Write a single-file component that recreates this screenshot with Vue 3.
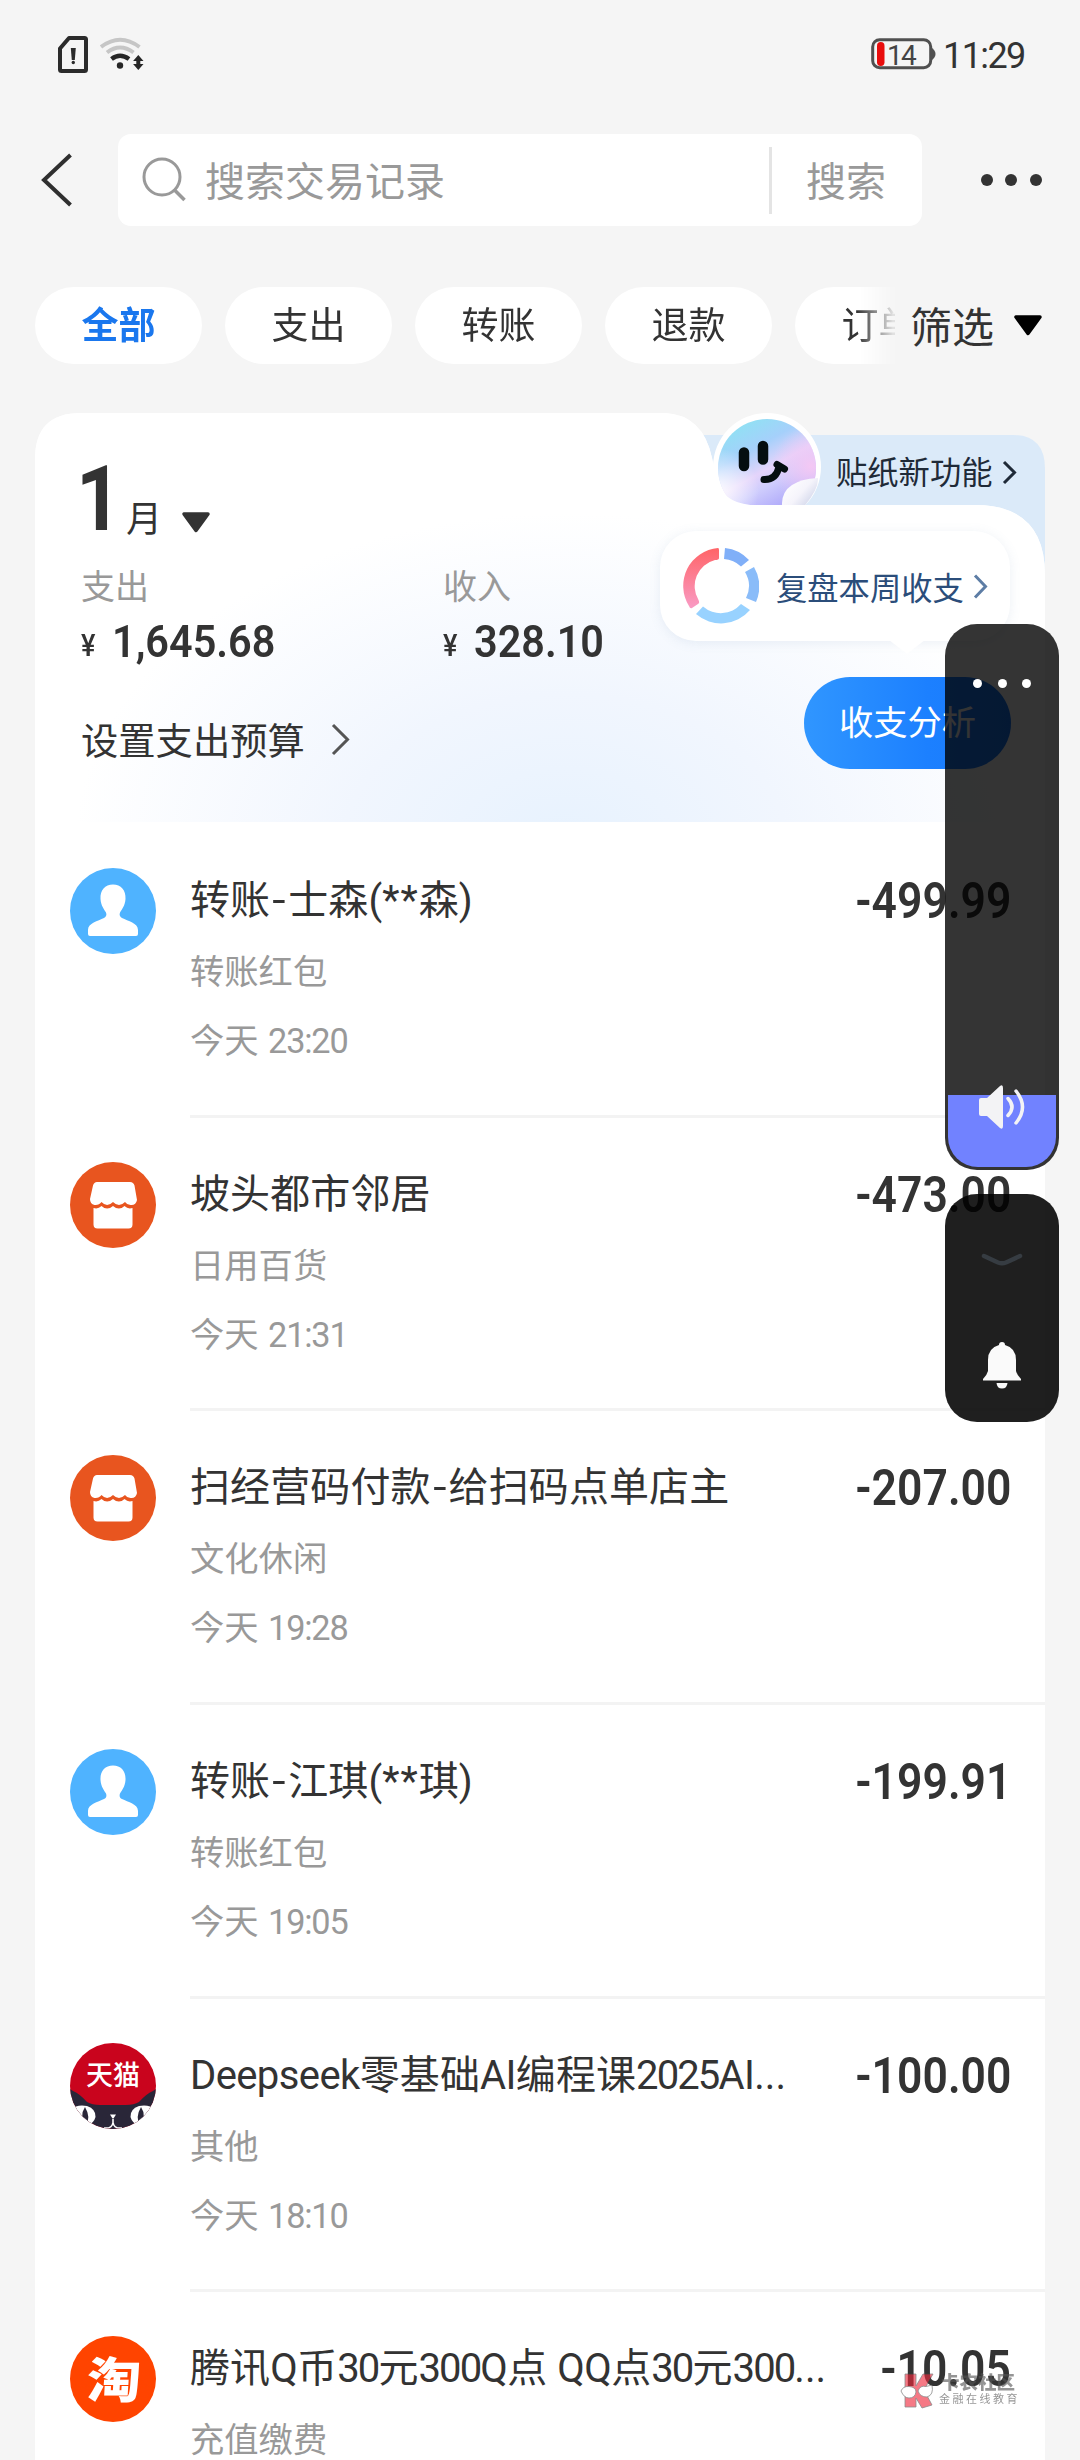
<script setup>
const chips = ['支出', '转账', '退款', '订单']

const records = [
  { icon: 'person', title: '转账-士森(**森)', tag: '转账红包', day: '今天', time: '23:20', amount: '-499.99' },
  { icon: 'shop', title: '坡头都市邻居', tag: '日用百货', day: '今天', time: '21:31', amount: '-473.00' },
  { icon: 'shop', title: '扫经营码付款-给扫码点单店主', tag: '文化休闲', day: '今天', time: '19:28', amount: '-207.00' },
  { icon: 'person', title: '转账-江琪(**琪)', tag: '转账红包', day: '今天', time: '19:05', amount: '-199.91' },
  { icon: 'tmall', title: 'Deepseek零基础AI编程课2025AI...', tag: '其他', day: '今天', time: '18:10', amount: '-100.00' },
  { icon: 'taobao', title: '腾讯Q币30元300Q点 QQ点30元300...', tag: '充值缴费', amount: '-10.05' },
]

// Latin letters, digits and dashes are spaced differently from Han characters
function segments(text) {
  return text.match(/-|\*+|[A-Za-z]+|[0-9]+|\.{3}|[^A-Za-z0-9.*-]+/g).map((t) => ({
    t,
    kind: t === '-' ? 'dash' : /^[0-9]/.test(t) ? 'digits' : /^[A-Z]/i.test(t) ? 'latin' : t[0] === '*' ? 'stars' : 'han',
  }))
}
</script>

<template>
  <div class="screen">
    <div class="status">
      <svg class="sim" width="30" height="37" viewBox="0 0 30 37">
        <path d="M11 2H26.500Q28 2 28 3.500V33.500Q28 35 26.500 35H3.500Q2 35 2 33.500V12.500Z" fill="none" stroke="#2b2b2b" stroke-width="4" stroke-linejoin="round" />
        <path d="M12.800 12h5l-1 12h-3z" fill="#2b2b2b" /><circle cx="15.300" cy="26.500" r="1.700" fill="#2b2b2b" />
      </svg>
      <svg class="wifi" width="45" height="36" viewBox="0 0 45 36">
        <g fill="none" stroke-width="4">
          <path d="M1 10Q20 -4.500 39.500 10" stroke="#c6c6c6" />
          <path d="M7 15.500Q20 5.500 33.500 15.500" stroke="#c6c6c6" />
          <path d="M11.500 22Q20 15.500 29 22" stroke="#262626" stroke-width="4.500" />
        </g>
        <circle cx="20" cy="28.500" r="3.200" fill="#262626" />
        <path d="M38.300 18l5.200 6h-3.200v3h3.200l-5.200 6-5.200-6h3.200v-3h-3.200z" fill="#262626" />
      </svg>
      <span class="grow"></span>
      <div class="battery">
        <svg width="65" height="32" viewBox="0 0 65 32">
          <rect x="1.700" y="1.700" width="58" height="28" rx="7" fill="none" stroke="#505050" stroke-width="3" />
          <path d="M59.500 9q5 3 5 7t-5 7z" fill="#505050" />
          <rect x="6" y="4" width="7.500" height="24" rx="3.700" fill="#e90d0d" />
        </svg>
        <span class="level">14</span>
      </div>
      <span class="clock">11:29</span>
    </div>

    <div class="nav">
      <svg class="back" width="34" height="54" viewBox="0 0 34 54"><path d="M30.500 2L4 27L30.500 52" fill="none" stroke="#2f2f2f" stroke-width="4" /></svg>
      <div class="search">
        <svg width="46" height="46" viewBox="0 0 46 46"><circle cx="20" cy="20" r="18" fill="none" stroke="#999" stroke-width="3" /><path d="M32 32.500L42.500 43" stroke="#999" stroke-width="3.500" /></svg>
        <span class="hint">搜索交易记录</span>
        <i class="bar"></i>
        <span class="go">搜索</span>
      </div>
      <div class="more"><i></i><i></i><i></i></div>
    </div>

    <div class="filters">
      <div class="chips">
        <span class="chip on">全部</span>
        <span v-for="c in chips" :key="c" class="chip">{{ c }}</span>
      </div>
      <span class="pick">筛选</span>
      <svg width="30" height="21" viewBox="0 0 30 21"><path d="M3 2H27L15 18.500Z" fill="#000" stroke="#000" stroke-width="3.500" stroke-linejoin="round" /></svg>
    </div>

    <div class="card">
      <div class="summary">
        <svg class="shape" width="1010" height="411" viewBox="0 0 1010 411">
          <defs>
            <radialGradient id="glow" gradientUnits="userSpaceOnUse" cx="0" cy="0" r="1" gradientTransform="translate(530 430) scale(490 330)">
              <stop offset="0" stop-color="#e7f2fe" /><stop offset=".45" stop-color="#f1f6fe" /><stop offset="1" stop-color="#ffffff" />
            </radialGradient>
            <linearGradient id="face" x1=".2" y1="0" x2=".75" y2="1">
              <stop offset="0" stop-color="#8ce4f2" /><stop offset=".3" stop-color="#a5d0fb" /><stop offset=".52" stop-color="#e4d4fb" /><stop offset=".65" stop-color="#cfcdfd" /><stop offset=".85" stop-color="#b3aefa" /><stop offset="1" stop-color="#e5c9fb" />
            </linearGradient>
            <radialGradient id="sheen" cx="0" cy=".72" r=".42"><stop offset="0" stop-color="#fff" stop-opacity=".9" /><stop offset="1" stop-color="#fff" stop-opacity="0" /></radialGradient>
            <radialGradient id="pink" cx=".95" cy=".48" r=".4"><stop offset="0" stop-color="#f4c8f4" /><stop offset="1" stop-color="#f4c8f4" stop-opacity="0" /></radialGradient>
            <linearGradient id="curl" x1="0" y1="0" x2="1" y2="1"><stop offset=".1" stop-color="#fff" /><stop offset=".45" stop-color="#f5f4fb" /><stop offset=".7" stop-color="#d5d9ec" /></linearGradient>
            <clipPath id="above"><rect x="660" y="0" width="140" height="92" /></clipPath>
          </defs>
          <path d="M640 22H978Q1010 22 1010 56V170H640Z" fill="#dbeaf9" />
          <path d="M0 411V46Q0 0 46 0H630Q668 2 677 45Q684 92 735 92H940Q1010 92 1010 162V411Z" fill="#fff" />
          <path d="M0 409V46Q0 0 46 0H630Q668 2 677 45Q684 92 735 92H940Q1010 92 1010 162V409Z" fill="url(#glow)" />
          <g clip-path="url(#above)">
            <circle cx="732" cy="54" r="54" fill="#fff" />
            <circle cx="732" cy="55" r="49" fill="url(#face)" />
            <circle cx="732" cy="55" r="49" fill="url(#sheen)" />
            <circle cx="732" cy="55" r="49" fill="url(#pink)" />
            <path d="M747 105V90Q748 67 783 65Q784 80 758 105Z" fill="url(#curl)" />
            <path d="M683 65Q686 92 724 92.500L683 93Z" fill="#fff" />
          </g>
          <g stroke="#050e10" fill="none" stroke-linecap="round">
            <path d="M709 39.500v13.500M728 33v13.500" stroke-width="10.500" />
            <path d="M729 66.500Q741 67 744 54" stroke-width="7" />
            <path d="M742 51.500L749.500 56" stroke-width="7" />
          </g>
        </svg>

        <div class="month">
          <b>1</b><span>月</span>
          <svg width="30" height="21" viewBox="0 0 30 21"><path d="M3 2H27L15 18.500Z" fill="#333" stroke="#333" stroke-width="3.500" stroke-linejoin="round" /></svg>
        </div>
        <div class="totals">
          <div class="total"><span class="label">支出</span><span class="sum"><em>¥</em><b>1,645.68</b></span></div>
          <div class="total"><span class="label">收入</span><span class="sum"><em>¥</em><b>328.10</b></span></div>
        </div>
        <div class="budget">
          设置支出预算
          <svg width="20" height="33" viewBox="0 0 20 33"><path d="M2 2L16.500 16.500L2 31" fill="none" stroke="#555" stroke-width="3" /></svg>
        </div>

        <div class="sticker">
          <span>贴纸新功能</span>
          <svg width="16" height="25" viewBox="0 0 16 25"><path d="M2 2L12.500 12.500L2 23" fill="none" stroke="#1f2a38" stroke-width="3" /></svg>
        </div>
        <div class="review">
          <svg class="donut" width="76" height="78" viewBox="-38 -39 76 78">
            <defs><linearGradient id="red" x1="0" y1="0" x2="0" y2="1"><stop offset="0" stop-color="#ff6467" /><stop offset="1" stop-color="#f99bc4" /></linearGradient></defs>
            <path d="M-3 -38Q-2 -38 -2 -36V-28Q-2 -26 -6 -26A27 27 0 0 0 -22.500 14Q-21 17 -23 18L-29 22Q-31 23 -32 20A38 38 0 0 1 -3 -38Z" fill="url(#red)" />
            <path d="M4 -38A38 38 0 0 1 28 -26L20 -19.500A27 27 0 0 0 3 -27Z" fill="#80aff8" />
            <path d="M33 -19A38 38 0 0 1 35 16L25 12A27 27 0 0 0 24 -14Z" fill="#8abcf9" />
            <path d="M29 24A38 38 0 0 1 -25 28L-18 20.500A27 27 0 0 0 20 18Z" fill="#98d2ff" />
          </svg>
          <span>复盘本周收支</span>
          <svg width="16" height="25" viewBox="0 0 16 25"><path d="M2 1.500L12.500 12.500L2 23.500" fill="none" stroke="#5d7da5" stroke-width="3" /></svg>
          <i class="tail"></i>
        </div>
        <div class="analyse">收支分析</div>
      </div>

      <div v-for="(r, i) in records" :key="i" class="record">
        <svg class="icon" width="86" height="86" viewBox="0 0 86 86">
          <template v-if="r.icon === 'person'">
            <circle cx="43" cy="43" r="43" fill="#4fb3ff" />
            <path d="M43 16.500C51 16.500 56 22 55.500 31C55 38 52 41 50 44.500C49 47 50 49 52 50C58 53 68 55 68 62V66Q68 68 66 68H20Q18 68 18 66V62C18 55 28 53 34 50C36 49 37 47 36 44.500C34 41 31 38 30.500 31C30 22 35 16.500 43 16.500Z" fill="#fff" />
          </template>
          <template v-else-if="r.icon === 'shop'">
            <circle cx="43" cy="43" r="43" fill="#e8551f" />
            <path d="M27 20H60Q63.500 20 64.500 23.500L67 38Q66 43 61.500 43Q57.500 43.500 55 40Q49 46 43 40Q37 46 31.500 40Q29 43.500 24.500 43Q20 42 20 37L23 23.500Q24 20 27 20Z" fill="#fff" />
            <path d="M23.500 46Q28 47.500 31.500 44Q37 49 43 44Q49 49 54.500 44Q58 47.500 62.500 46V62.500Q62.500 66.500 58.500 66.500H27.500Q23.500 66.500 23.500 62.500Z" fill="#fff" />
          </template>
          <template v-else-if="r.icon === 'tmall'">
            <defs><clipPath id="disc"><circle cx="43" cy="43" r="43" /></clipPath></defs>
            <g clip-path="url(#disc)">
              <rect width="86" height="86" fill="#c9041d" />
              <path d="M0 46L3 48Q10 51 17 59Q22 62 30 62H56Q64 62 69 59Q76 51 83 48L86 46V86H0Z" fill="#292638" />
              <path d="M0 66Q8 61 17 63Q26 66 25.500 74Q24 80 17 83L7 80Z" fill="#fff" /><path d="M15 64Q9 73 16 83Q21 74 15 64Z" fill="#292638" />
              <path d="M86 66Q78 61 69 63Q60 66 60.500 74Q62 80 69 83L79 80Z" fill="#fff" /><path d="M71 64Q77 73 70 83Q65 74 71 64Z" fill="#292638" />
              <path d="M40 71.500h6l-2.500 4h-1z" fill="#fff" /><path d="M43 76v4M34 85Q42 86 43 79.500Q44 86 52 85" fill="none" stroke="#fff" stroke-width="1.600" />
            </g>
            <text x="43" y="41.500" class="tm">天猫</text>
          </template>
          <template v-else>
            <circle cx="43" cy="43" r="43" fill="#ff4400" />
            <text x="0" y="0" class="tb" transform="translate(43 62) scale(1.100 1) skewX(-3)">淘</text>
          </template>
        </svg>
        <div class="body">
          <div class="info">
            <div class="title"><span v-for="(s, k) in segments(r.title)" :key="k" :class="s.kind">{{ s.t }}</span></div>
            <div class="sub">{{ r.tag }}</div>
            <div v-if="r.time" class="sub time">{{ r.day }} <span>{{ r.time }}</span></div>
          </div>
          <div class="amount">{{ r.amount }}</div>
        </div>
      </div>
    </div>

    <div class="volume">
      <div class="dots"><i></i><i></i><i></i></div>
      <div class="fill"></div>
      <svg width="50" height="46" viewBox="0 0 50 46">
        <path d="M3 14H9L22 2Q25 0 25 4V42Q25 46 22 44L9 32H3Q1 32 1 30V16Q1 14 3 14Z" fill="#f3f3f5" />
        <path d="M30 14.500Q38 23 30 31.500M38 7Q51 23 38 39" fill="none" stroke="#f3f3f5" stroke-width="3.500" stroke-linecap="round" />
      </svg>
    </div>
    <div class="ringer">
      <svg width="42" height="14" viewBox="0 0 42 14"><path d="M3 3L17 9.500Q21 11 25 9.500L39 3" fill="none" stroke="#363c42" stroke-width="4.500" stroke-linecap="round" /></svg>
      <svg width="40" height="48" viewBox="0 0 40 48"><path d="M20 1Q23 1 23 4Q34 7 34 19V30Q35 34 39 38V39.500H1V38Q5 34 6 30V19Q6 7 17 4Q17 1 20 1Z" fill="#fafafa" /><path d="M14.500 42H25.500Q25 47.500 20 47.500Q15 47.500 14.500 42Z" fill="#fafafa" /></svg>
    </div>

    <div class="mark">
      <svg width="34" height="36" viewBox="0 0 34 36">
        <g fill="#f0283c" stroke="#444" stroke-width=".8">
          <path d="M5 1H16V13L23 1H33L24 17L32 32L22 35L16 25V34H5Z" />
          <path d="M1 18Q3 13 9 13.500Q16 14 16 19Q15 25 9 25Q4 25 1 18Z" fill="#fff" /><path d="M18 18Q20 12 26 13.500L32 12Q34 22 27 24Q20 24 18 18Z" fill="#fff" />
        </g>
      </svg>
      <div class="words"><b>卡农社区</b><span>金融在线教育</span></div>
    </div>
  </div>
</template>

<style>
body { margin: 0; background: #f5f5f5; }
</style>

<style scoped>
.screen { position: relative; width: 1080px; height: 2460px; overflow: hidden; background: #f5f5f5; color: #333; font-family: Roboto, "Noto Sans CJK SC", sans-serif; white-space: nowrap; }
.screen svg { display: block; flex: none; }
.screen i, .screen em { font-style: normal; }

.status { display: flex; align-items: center; height: 107px; padding: 0 56px 0 58px; box-sizing: border-box; }
.sim { margin-top: 2px; }
.wifi { margin: 3px 0 0 12px; }
.grow { flex: 1; }
.battery { position: relative; margin-right: 7px; }
.level { position: absolute; left: 16px; top: 4px; font-size: 28px; line-height: 27px; letter-spacing: -1.800px; color: #444; }
.clock { width: 81px; font-size: 36px; line-height: 40px; letter-spacing: -1.600px; margin-top: 5px; }

.nav { display: flex; align-items: center; height: 92px; margin-top: 27px; padding-left: 40px; }
.search { display: flex; align-items: center; width: 804px; height: 92px; margin-left: 44px; padding-left: 24px; box-sizing: border-box; border-radius: 13px; background: #fff; color: #999; font-size: 40px; }
.hint { margin-left: 17px; padding-bottom: 3px; }
.bar { width: 3px; height: 67px; margin-left: 324px; background: #e4e4e4; }
.go { margin-left: 34px; padding-bottom: 2px; }
.more { display: flex; gap: 12.300px; margin-left: 59px; }
.more i { width: 12px; height: 12px; border-radius: 50%; background: #333; }

.filters { display: flex; align-items: center; height: 77px; margin-top: 61px; padding-left: 35px; }
.chips { display: flex; gap: 23px; width: 860px; overflow: hidden; -webkit-mask-image: linear-gradient(90deg, #000 822px, rgba(0,0,0,.1) 858px); mask-image: linear-gradient(90deg, #000 822px, rgba(0,0,0,.1) 858px); }
.chip { flex: none; width: 167px; height: 77px; border-radius: 39px; background: #fff; font-size: 37px; line-height: 79px; text-align: center; }
.on { color: #1a77ee; font-weight: 700; }
.pick { width: 103px; margin-left: 15px; padding-bottom: 3px; font-size: 42px; }

.card { width: 1010px; margin: 49px 0 0 35px; }
.summary { position: relative; height: 411px; padding: 56px 0 0 46px; box-sizing: border-box; }
.shape { position: absolute; left: 0; top: 0; }
.month { position: relative; display: flex; align-items: flex-end; height: 64px; }
.month b { width: 43px; margin-left: -5px; font-size: 90px; line-height: 66px; transform: scaleX(.88); transform-origin: 0 0; }
.month span { font-size: 36px; line-height: 36px; margin: 0 19px -5px 7px; }
.totals { position: relative; display: flex; margin-top: 31px; }
.total { width: 362px; }
.label { display: block; color: #999; font-size: 34px; line-height: 46px; }
.sum { display: flex; align-items: center; height: 50px; margin-top: 7px; }
.sum em { width: 31px; font-size: 32px; font-weight: 500; line-height: 40px; margin-top: 6px; transform: scaleX(.85); transform-origin: 0 0; }
.sum b { font-size: 45px; line-height: 50px; font-weight: 600; transform: scaleX(.92); transform-origin: 0 0; }
.budget { position: relative; display: flex; align-items: center; gap: 26px; height: 50px; margin-top: 47px; font-size: 37.300px; }
.sticker { position: absolute; left: 801px; top: 36px; display: flex; align-items: center; gap: 9px; height: 46px; font-size: 31.300px; color: #1f2a38; }
.sticker span { padding-bottom: 3px; }
.review { position: absolute; left: 625px; top: 118px; display: flex; align-items: center; width: 350px; height: 110px; padding-left: 23px; box-sizing: border-box; border-radius: 36px; background: #fff; box-shadow: 0 2px 12px rgba(100,130,170,.12); font-size: 31.300px; color: #2b4d7a; }
.review span { margin: 0 9px 0 17px; }
.tail { position: absolute; left: 229px; top: 109px; border: solid transparent; border-width: 14px 18px 0; border-top-color: #fff; }
.analyse { position: absolute; left: 769px; top: 264px; width: 207px; height: 92px; border-radius: 46px; background: linear-gradient(90deg, #3096ff, #1c80ff 60%, #1878fa); color: #fff; font-size: 34.300px; line-height: 93px; text-align: center; }

.record { display: flex; height: 293.700px; padding-left: 35px; background: #fff; }
.icon { margin-top: 44px; }
.body { display: flex; flex: 1; justify-content: space-between; margin-left: 34px; padding-right: 34px; border-bottom: 3px solid #f3f3f3; box-sizing: border-box; }
.info { padding-top: 47px; }
.title { height: 60px; font-size: 40px; line-height: 60px; letter-spacing: .1px; }
.latin { letter-spacing: -.600px; }
.digits { letter-spacing: -1.900px; }
.stars { letter-spacing: 1px; }
.dash { display: inline-block; width: 18px; text-align: center; transform: scaleX(1.200); }
.sub { margin-top: 17px; font-size: 34.300px; line-height: 48px; color: #999; }
.time { margin-top: 21px; }
.time span { letter-spacing: -1.200px; margin-left: 1px; }
.amount { margin-top: 47px; height: 60px; font-size: 50px; line-height: 60px; font-weight: 600; transform: scaleX(.89); transform-origin: 100% 0; }
.tm { fill: #fff; font: 500 27px "Noto Sans CJK SC", sans-serif; text-anchor: middle; }
.tb { fill: #fff; font: 900 49px "Noto Sans CJK SC", sans-serif; text-anchor: middle; }

.volume { position: absolute; left: 945px; top: 624px; width: 114px; height: 546px; border-radius: 32px; background: rgba(0,0,0,.795); }
.volume .dots { position: absolute; left: 28px; top: 55px; display: flex; gap: 15.600px; }
.volume .dots i { width: 9px; height: 9px; border-radius: 50%; background: #fff; }
.fill { position: absolute; left: 3px; right: 3px; bottom: 3px; height: 72px; border-radius: 0 0 30px 30px; background: #7182ff; }
.volume > svg { position: absolute; left: 33px; top: 460px; }
.ringer { position: absolute; left: 945px; top: 1194px; width: 114px; height: 228px; border-radius: 32px; background: rgba(0,0,0,.88); display: flex; flex-direction: column; align-items: center; padding-top: 59px; box-sizing: border-box; gap: 74px; }

.mark { position: absolute; left: 900px; top: 2373px; display: flex; opacity: .62; }
.words { display: flex; flex-direction: column; margin-left: 5px; color: #555; }
.words b { margin-left: 2px; font-size: 18.500px; line-height: 20px; font-weight: 900; }
.words span { font-size: 11px; line-height: 14px; letter-spacing: 2.500px; }
</style>
